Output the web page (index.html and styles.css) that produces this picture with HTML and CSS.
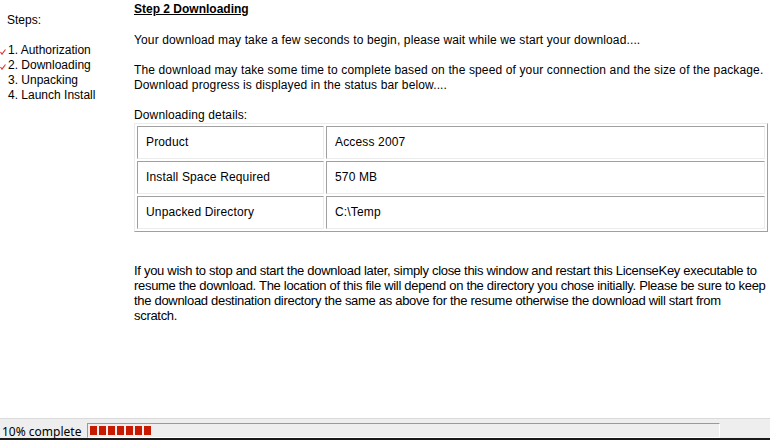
FILE: index.html
```html
<!DOCTYPE html>
<html lang="en">
<head>
    <meta charset="utf-8">
    <title>LicenseKey Download</title>
    <link rel="stylesheet" href="styles.css">
</head>
<body>
    <div class="window">
        <div class="main">
            <div class="steps">
                <p class="steps-title">Steps:</p>
                <ul class="step-list">
                    <li><span class="check"><svg width="6" height="6" viewBox="0 0 6 6"><path d="M0.5 3 L2 5.2 L5.5 0.5" fill="none" stroke="#e03030" stroke-width="1.1"/></svg></span>1. Authorization</li>
                    <li><span class="check"><svg width="6" height="6" viewBox="0 0 6 6"><path d="M0.5 3 L2 5.2 L5.5 0.5" fill="none" stroke="#e03030" stroke-width="1.1"/></svg></span>2. Downloading</li>
                    <li><span class="check"></span>3. Unpacking</li>
                    <li><span class="check"></span>4. Launch Install</li>
                </ul>
            </div>

            <div class="content">
                <h1 class="step-title">Step 2 Downloading</h1>
                <p class="intro">Your download may take a few seconds to begin, please wait while we start your download....</p>
                <p class="intro">The download may take some time to complete based on the speed of your connection and the size of the package. Download progress is displayed in the status bar below....</p>
                <p class="details-label">Downloading details:</p>
                <table class="details">
                    <tr><td class="key">Product</td><td>Access 2007</td></tr>
                    <tr><td class="key">Install Space Required</td><td>570 MB</td></tr>
                    <tr><td class="key">Unpacked Directory</td><td>C:\Temp</td></tr>
                </table>
                <p class="note">If you wish to stop and start the download later, simply close this window and restart this LicenseKey executable to resume the download. The location of this file will depend on the directory you chose initially. Please be sure to keep the download destination directory the same as above for the resume otherwise the download will start from scratch.</p>
            </div>
        </div>

        <div class="statusbar">
            <span class="status-text">10% complete</span>
            <div class="progress">
                <span class="block"></span><span class="block"></span><span class="block"></span><span class="block"></span><span class="block"></span><span class="block"></span><span class="block"></span>
            </div>
        </div>
    </div>
</body>
</html>
```

FILE: styles.css
```css
body {
    margin: 0;
    padding: 0;
    background-color: #ffffff;
    font-family: "Liberation Sans", Arial, sans-serif;
    font-size: 12px;
    line-height: 15px;
    color: #000000;
}
p, h1, ul {
    margin: 0;
    padding: 0;
}
.window {
    display: flex;
    flex-direction: column;
    height: 440px;
    overflow: hidden;
}
.main {
    display: flex;
    flex: 1;
}
.steps {
    width: 134px;
    flex-shrink: 0;
    padding-top: 13px;
}
.steps-title {
    padding-left: 7px;
}
.step-list {
    list-style: none;
    margin-top: 15px;
}
.step-list li {
    display: flex;
    align-items: center;
}
.check {
    display: inline-flex;
    width: 8px;
    height: 15px;
    align-items: center;
    padding-top: 2px;
    box-sizing: border-box;
}
.content {
    width: 634px;
    padding-top: 2px;
    letter-spacing: 0.13px;
}
.step-title {
    font-size: 12px;
    font-weight: bold;
    text-decoration: underline;
    margin-bottom: 16px;
    letter-spacing: 0;
}
.intro {
    margin-bottom: 15px;
}
.details-label {
    line-height: 14px;
}
.details {
    width: 634px;
    margin-top: 1px;
    border: 1px solid;
    border-color: #ececec #a0a0a0 #a0a0a0 #ececec;
    border-spacing: 2px;
    font-size: 12px;
    letter-spacing: 0.15px;
}
.details td {
    border: 1px solid;
    border-color: #a0a0a0 #ececec #ececec #a0a0a0;
    padding: 8px;
    line-height: 15px;
}
.details td.key {
    width: 169px;
}
.note {
    width: 632px;
    margin-top: 31px;
    font-size: 13px;
    letter-spacing: -0.3px;
}
.statusbar {
    display: flex;
    align-items: center;
    height: 19px;
    background-color: #eeeeee;
    border-top: 1px solid #dadada;
    border-bottom: 2px solid #1a1a1a;
    font-family: "Noto Sans", sans-serif;
    font-size: 12px;
}
.status-text {
    width: 87px;
    padding-left: 2px;
    padding-top: 5px;
    box-sizing: border-box;
}
.progress {
    display: flex;
    gap: 2px;
    width: 633px;
    height: 15px;
    margin-top: 3px;
    padding: 2px;
    box-sizing: border-box;
    border: 1px solid;
    border-color: #9a9a9a #ffffff #ffffff #9a9a9a;
}
.block {
    width: 7px;
    height: 100%;
    background-color: #c81a00;
}
```
